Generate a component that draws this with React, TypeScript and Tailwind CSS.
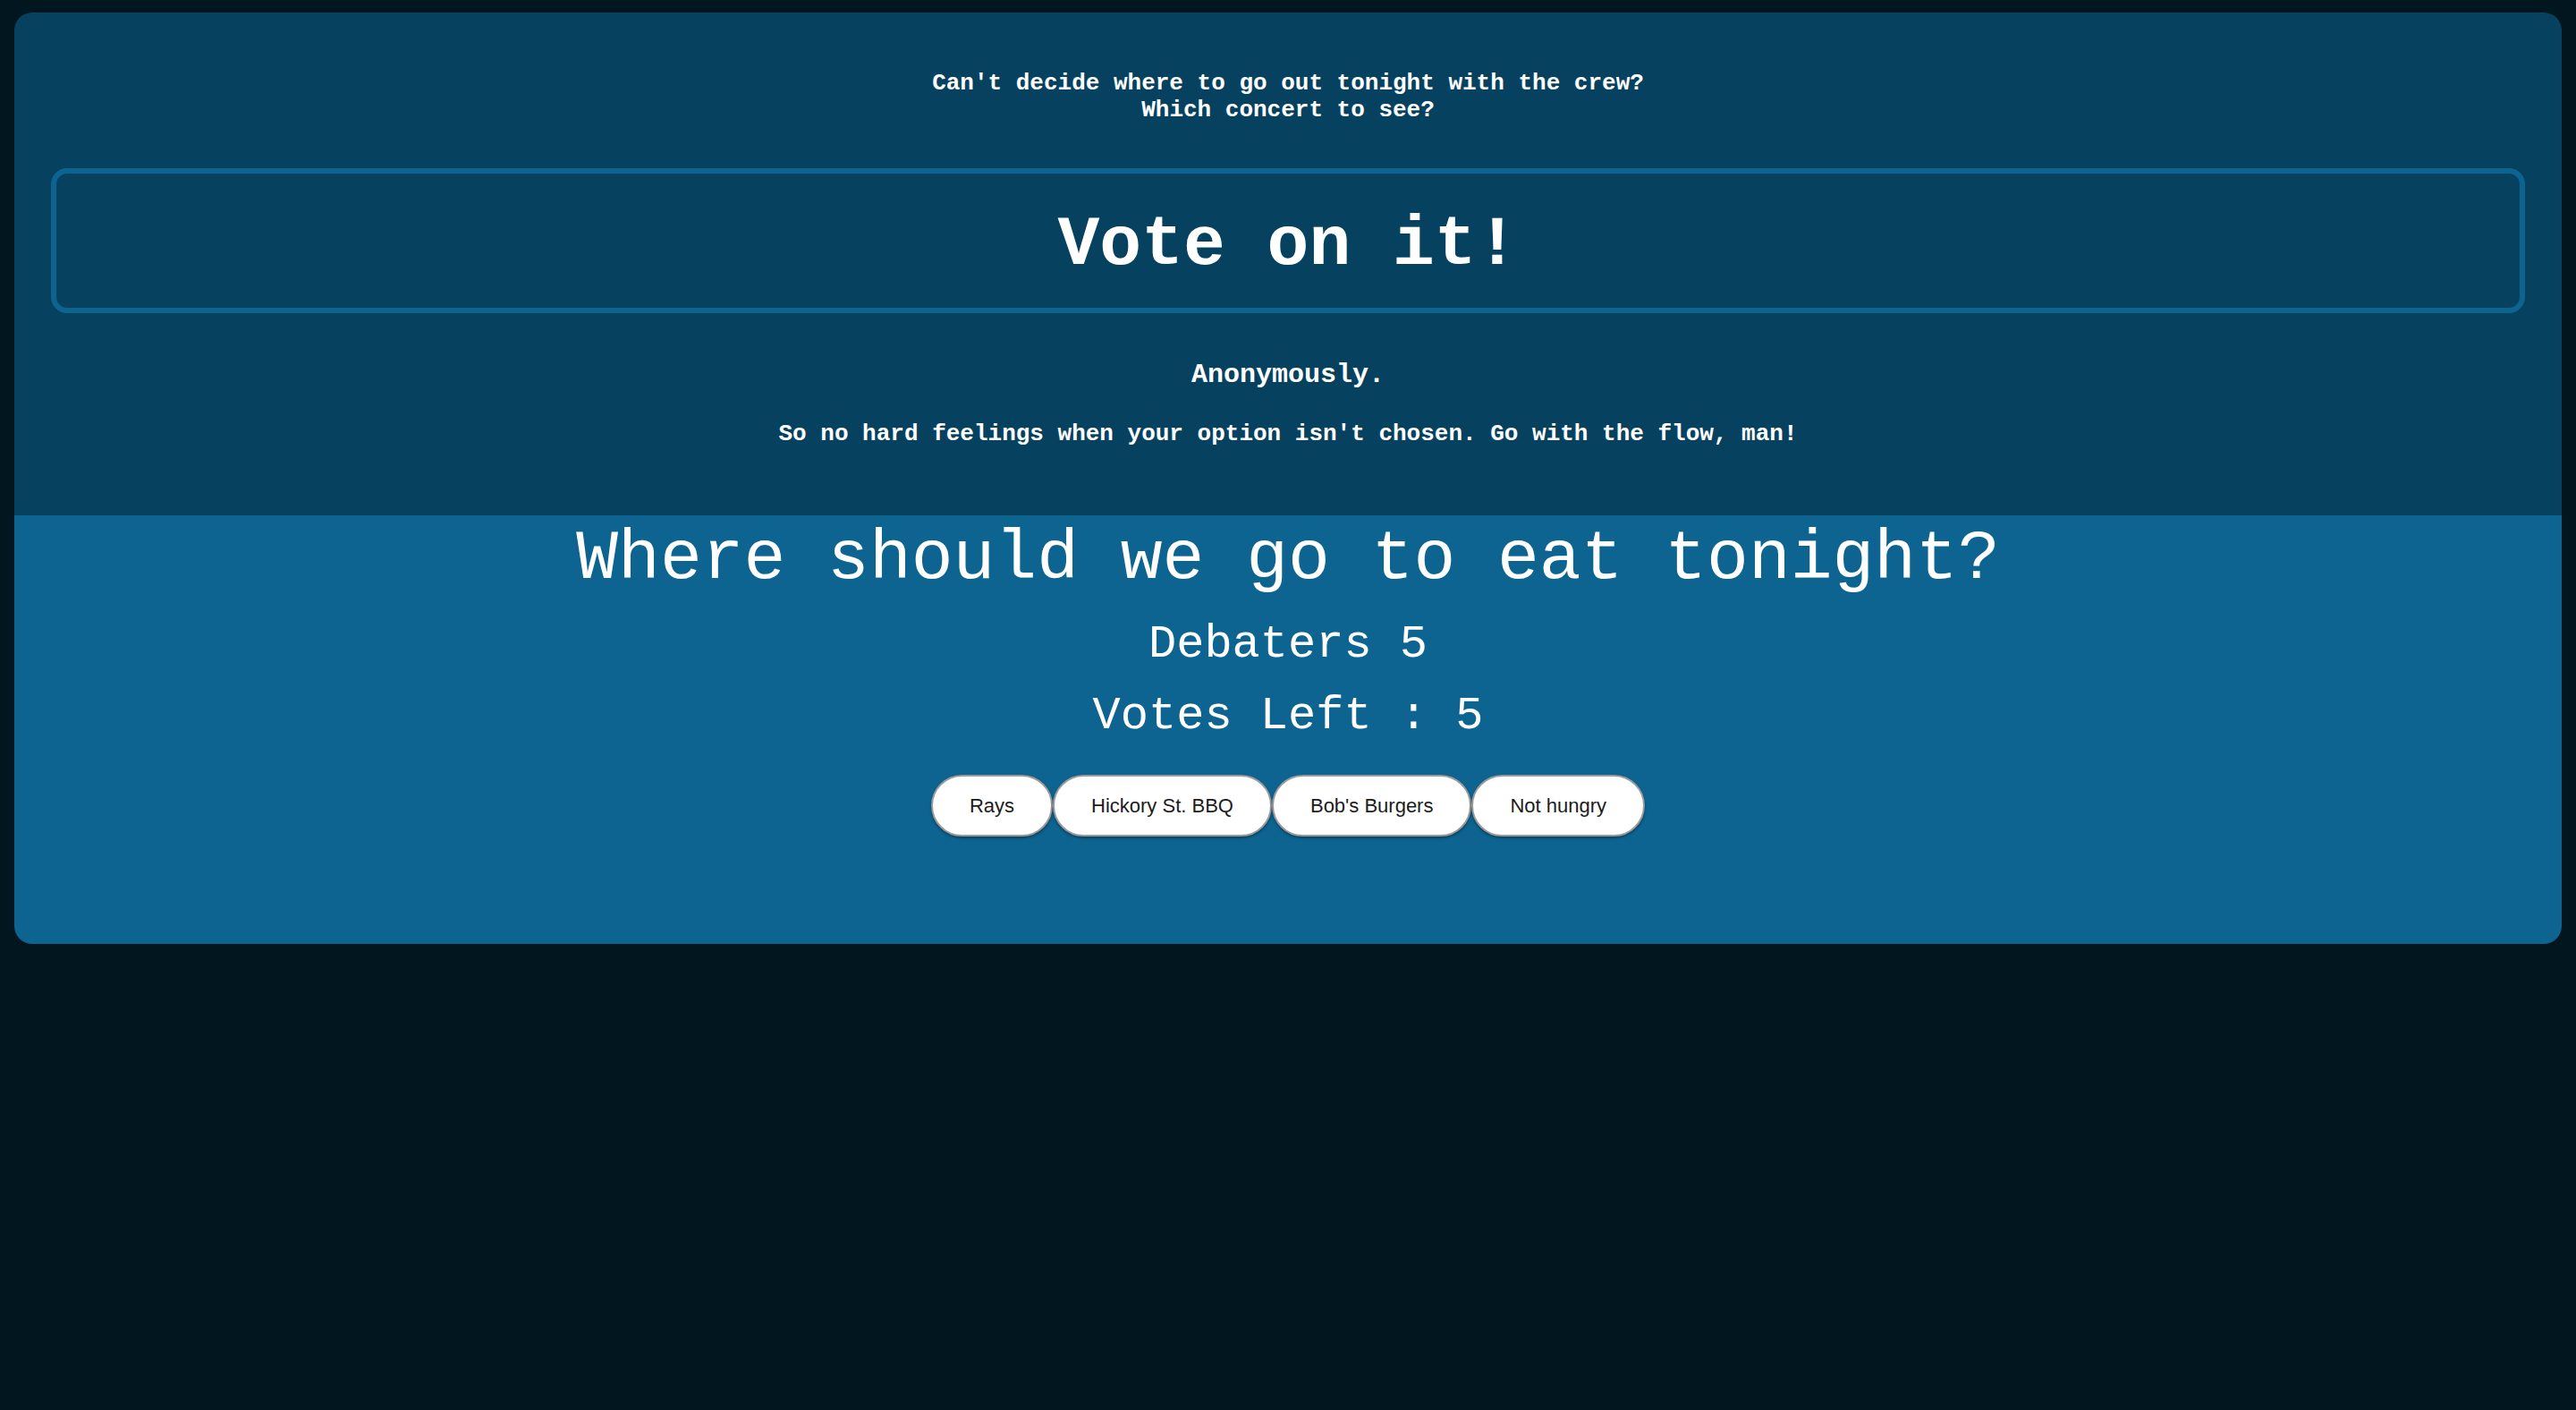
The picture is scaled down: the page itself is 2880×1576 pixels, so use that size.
import React from 'react'

const options = ['Rays', 'Hickory St. BBQ', "Bob's Burgers", 'Not hungry']

function OptionButton({ label }: { label: string }) {
  return (
    <button
      type="button"
      className="h-[69px] px-[41px] rounded-full bg-white border-2 border-[#9a9a9a] shadow-[0_2px_3px_rgba(0,0,0,0.35)] text-[22px] leading-[26px] text-[#1c1c1c] font-['Liberation_Sans',Arial,sans-serif]"
    >
      {label}
    </button>
  )
}

export default function App() {
  return (
    <div className="min-h-[1576px] bg-[#01161f] pt-[14px] px-[16px] font-['Liberation_Mono','Courier_New',monospace] text-white">
      <div className="rounded-[20px] overflow-hidden">
        <header className="bg-[#06425f] pt-[64px] pb-[76px] px-[41px] text-center">
          <p className="text-[26px] leading-[30px] font-bold">
            Can't decide where to go out tonight with the crew?
            <br />
            Which concert to see?
          </p>
          <div className="mt-[50px] h-[162px] border-[6px] border-[#0d6490] rounded-[18px] pt-[41px]">
            <h1 className="text-[78px] leading-[78px] font-bold">Vote on it!</h1>
          </div>
          <p className="mt-[52px] text-[30px] leading-[34px] font-bold">Anonymously.</p>
          <p className="mt-[34px] text-[26px] leading-[30px] font-bold">
            So no hard feelings when your option isn't chosen. Go with the flow, man!
          </p>
        </header>

        <section className="bg-[#0d6490] pt-[5px] pb-[120px] flex flex-col items-center">
          <h2 className="text-[78px] leading-[88px]">Where should we go to eat tonight?</h2>
          <h3 className="mt-[22px] text-[52px] leading-[59px]">Debaters 5</h3>
          <h3 className="mt-[21px] text-[52px] leading-[59px]">Votes Left : 5</h3>
          <div className="mt-[36px] flex">
            {options.map((o) => (
              <OptionButton key={o} label={o} />
            ))}
          </div>
        </section>
      </div>
    </div>
  )
}
